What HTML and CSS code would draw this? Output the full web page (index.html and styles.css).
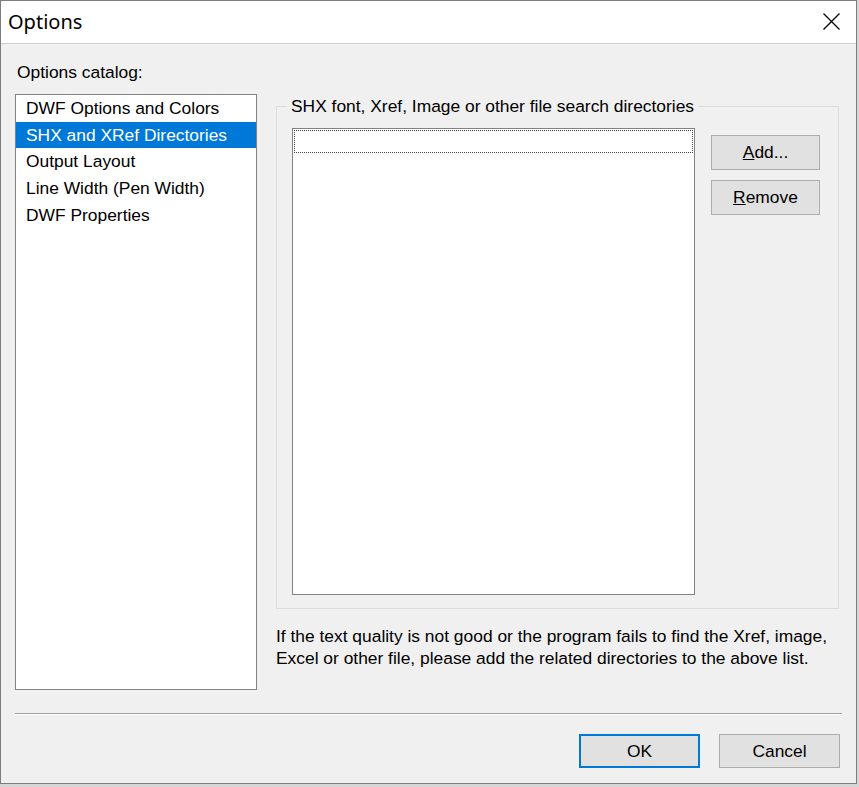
FILE: index.html
```html
<!DOCTYPE html>
<html lang="en">
<head>
	<meta charset="UTF-8">
	<title>Options</title>
	<link rel="stylesheet" href="styles.css">
</head>
<body>
	<div class="window">
		<div class="titlebar">
			<span class="title">Options</span>
			<svg class="close" width="17" height="17" viewBox="0 0 17 17">
				<path d="M0.5 0.5L16.5 16.5M16.5 0.5L0.5 16.5" stroke="#000" stroke-width="1.3" fill="none"/>
			</svg>
		</div>
		<div class="client">
			<div class="main">
				<div class="catalog">
					<div class="label">Options catalog:</div>
					<ul class="listbox">
						<li>DWF Options and Colors</li>
						<li class="selected">SHX and XRef Directories</li>
						<li>Output Layout</li>
						<li>Line Width (Pen Width)</li>
						<li>DWF Properties</li>
					</ul>
				</div>
				<div class="page">
					<fieldset class="group">
						<legend>SHX font, Xref, Image or other file search directories</legend>
						<div class="group-body">
							<div class="dirlist">
								<div class="focus-row"></div>
							</div>
							<div class="side-buttons">
								<button class="btn side"><u>A</u>dd...</button>
								<button class="btn side"><u>R</u>emove</button>
							</div>
						</div>
					</fieldset>
					<p class="hint">If the text quality is not good or the program fails to find the Xref, image,<br>Excel or other file, please add the related directories to the above list.</p>
				</div>
			</div>
			<div class="separator"></div>
			<div class="footer">
				<button class="btn wide default">OK</button>
				<button class="btn wide">Cancel</button>
			</div>
		</div>
	</div>
</body>
</html>
```

FILE: styles.css
```css
html,body{
	margin: 0;
	background: #d6d6d6;
}
body{
	font-family: "Liberation Sans", Arial, sans-serif;
	font-size: 17.4px;
	color: #000;
}
.window{
	width: 857px;
	height: 784px;
	box-sizing: border-box;
	border: 1px solid #7c7c7c;
	background: #f0f0f0;
}
.titlebar{
	height: 43px;
	background: #fff;
	border-bottom: 1px solid #d0d0d0;
	display: flex;
	align-items: center;
	justify-content: space-between;
	padding: 0 16px 2px 7px;
	box-sizing: border-box;
}
.title{
	font-family: "Noto Sans", "Open Sans", sans-serif;
	font-size: 20px;
}
.client{padding: 0 14px;}
.main{display: flex;align-items: flex-start;}
.catalog{width: 242px;padding-top: 17px;}
.label{line-height: 22px;padding-left: 2px;}
.listbox{
	margin: 11px 0 0;
	padding: 0;
	list-style: none;
	height: 596px;
	box-sizing: border-box;
	border: 1px solid #828282;
	background: #fff;
}
.listbox li{line-height: 26.7px;padding-left: 10px;white-space: nowrap;}
.listbox li.selected{background: #0078d7;color: #fff;}
.page{margin-left: 19px;padding-top: 52px;}
.group{
	margin: 0;
	padding: 0 18px 13px 15px;
	width: 563px;
	box-sizing: border-box;
	border: 1px solid #dcdcdc;
	min-width: 0;
}
.group legend{
	padding: 0 4px;
	margin-left: -5px;
	line-height: 20px;
}
.group-body{display: flex;align-items: flex-start;margin-top: 12px;}
.dirlist{
	width: 403px;
	height: 467px;
	box-sizing: border-box;
	border: 1px solid #828282;
	background: #fff;
	padding: 1px;
}
.focus-row{height: 23px;box-sizing: border-box;border: 1px dotted #444;}
.side-buttons{
	display: flex;
	flex-direction: column;
	gap: 10px;
	margin: 7px 0 0 16px;
}
.btn{
	font: inherit;
	color: #000;
	background: #e1e1e1;
	border: 1px solid #adadad;
	padding: 0;
	box-sizing: border-box;
}
.btn.side{width: 109px;height: 35px;}
.btn.wide{width: 121px;height: 34px;}
.btn.default{border: 2px solid #0078d7;}
.hint{margin: 16px 0 0;line-height: 22px;white-space: nowrap;}
.separator{
	margin-top: 23px;
	border-top: 1px solid #a0a0a0;
	border-bottom: 1px solid #fff;
}
.footer{
	display: flex;
	justify-content: flex-end;
	gap: 19px;
	margin-top: 19px;
	padding-right: 2px;
}
```
